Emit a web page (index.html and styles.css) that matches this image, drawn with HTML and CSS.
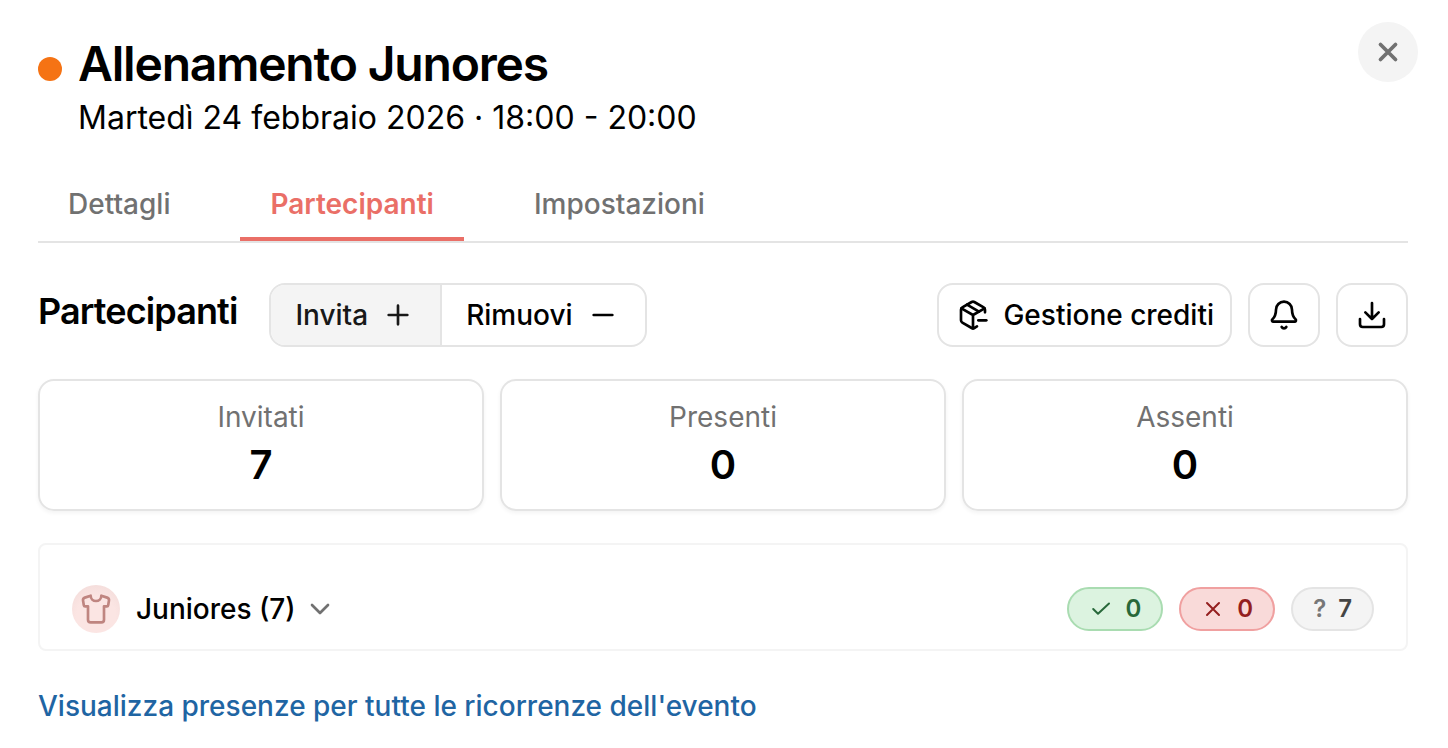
FILE: index.html
```
<!DOCTYPE html>
<html lang="it">
<head>
  <meta charset="UTF-8">
  <meta name="viewport" content="width=device-width, initial-scale=1.0">
  <title>Allenamento Junores</title>
  <link rel="stylesheet" href="styles.css">
</head>
<body>
  <main class="event">
    <header class="event-header">
      <span class="event-dot"></span>
      <div class="event-heading">
        <h1>Allenamento Junores</h1>
        <p class="event-date">Martedì 24 febbraio 2026 · 18:00 - 20:00</p>
      </div>
      <button class="close-button" type="button" aria-label="Chiudi">
        <svg class="icon close-icon" viewBox="0 0 24 24"><path d="M18 6 6 18M6 6l12 12"/></svg>
      </button>
    </header>

    <nav class="tabs">
      <button class="tab" type="button">Dettagli</button>
      <button class="tab active" type="button">Partecipanti</button>
      <button class="tab" type="button">Impostazioni</button>
    </nav>

    <section class="toolbar">
      <h2>Partecipanti</h2>
      <div class="button-group">
        <button class="group-button selected" type="button">
          Invita
          <svg class="icon" viewBox="0 0 24 24"><path d="M5 12h14M12 5v14"/></svg>
        </button>
        <button class="group-button" type="button">
          Rimuovi
          <svg class="icon" viewBox="0 0 24 24"><path d="M5 12h14"/></svg>
        </button>
      </div>
      <div class="toolbar-actions">
        <button class="outline-button" type="button">
          <svg class="icon" viewBox="0 0 24 24">
            <path d="M16 16h6"/>
            <path d="M21 10V8a2 2 0 0 0-1-1.73l-7-4a2 2 0 0 0-2 0l-7 4A2 2 0 0 0 3 8v8a2 2 0 0 0 1 1.73l7 4a2 2 0 0 0 2 0l2-1.14"/>
            <path d="m7.5 4.27 9 5.15"/>
            <path d="M3.29 7 12 12l8.71-5M12 22V12"/>
          </svg>
          Gestione crediti
        </button>
        <button class="outline-button icon-only" type="button" aria-label="Notifiche">
          <svg class="icon" viewBox="0 0 24 24">
            <path d="M10.268 21a2 2 0 0 0 3.464 0"/>
            <path d="M3.262 15.326A1 1 0 0 0 4 17h16a1 1 0 0 0 .74-1.673C19.41 13.956 18 12.499 18 8A6 6 0 0 0 6 8c0 4.499-1.411 5.956-2.738 7.326"/>
          </svg>
        </button>
        <button class="outline-button icon-only" type="button" aria-label="Scarica">
          <svg class="icon" viewBox="0 0 24 24">
            <path d="M21 15v4a2 2 0 0 1-2 2H5a2 2 0 0 1-2-2v-4"/>
            <path d="m7 10 5 5 5-5M12 15V3"/>
          </svg>
        </button>
      </div>
    </section>

    <section class="stats">
      <div class="stat">
        <span class="stat-label">Invitati</span>
        <span class="stat-value">7</span>
      </div>
      <div class="stat">
        <span class="stat-label">Presenti</span>
        <span class="stat-value">0</span>
      </div>
      <div class="stat">
        <span class="stat-label">Assenti</span>
        <span class="stat-value">0</span>
      </div>
    </section>

    <section class="team">
      <span class="team-avatar">
        <svg class="icon" viewBox="0 0 24 24">
          <path d="M20.38 3.46 16 2a4 4 0 0 1-8 0L3.62 3.46a2 2 0 0 0-1.34 2.23l.58 3.47a1 1 0 0 0 .99.84H6v10c0 1.1.9 2 2 2h8a2 2 0 0 0 2-2V10h2.15a1 1 0 0 0 .99-.84l.58-3.47a2 2 0 0 0-1.34-2.23z"/>
        </svg>
      </span>
      <button class="team-toggle" type="button">
        Juniores (7)
        <svg class="icon chevron" viewBox="0 0 24 24"><path d="m6 9 6 6 6-6"/></svg>
      </button>
      <div class="badges">
        <span class="badge present">
          <svg class="icon" viewBox="0 0 24 24"><path d="m4.2 12 4.800 4.800L20 6.500"/></svg>
          0
        </span>
        <span class="badge absent">
          <svg class="icon" viewBox="0 0 24 24"><path d="M18 6 6 18M6 6l12 12"/></svg>
          0
        </span>
        <span class="badge pending"><span class="badge-mark">?</span>7</span>
      </div>
    </section>

    <a class="all-link" href="#">Visualizza presenze per tutte le ricorrenze dell'evento</a>
  </main>
</body>
</html>
```
FILE: styles.css
```
* {
  box-sizing: border-box;
}
body {
  margin: 0;
  background: #fff;
  color: #000;
  font-family: Inter, "Liberation Sans", sans-serif;
  font-size: 28px;
  line-height: 40px;
  font-optical-sizing: none;
}
h1,
h2,
p {
  margin: 0;
}
button {
  font: inherit;
  font-weight: 500;
  color: inherit;
  background: none;
  border: 0;
  padding: 0;
  cursor: pointer;
}
.icon {
  width: 32px;
  height: 32px;
  flex: none;
  fill: none;
  stroke: currentColor;
  stroke-width: 2;
  stroke-linecap: round;
  stroke-linejoin: round;
}
.event {
  padding: 22px 40px 20px 38px;
}

/* header */
.event-header {
  display: flex;
  align-items: flex-start;
}
.event-dot {
  width: 24px;
  height: 24px;
  margin: 35px 16px 0 0;
  border-radius: 50%;
  background: #f57314;
}
.event-heading {
  flex: 1;
  padding-top: 14px;
}
h1 {
  font-size: 48px;
  font-weight: 600;
  line-height: 56px;
  letter-spacing: -0.025em;
}
.event-date {
  font-size: 32px;
  line-height: 52px;
}
.close-button {
  display: flex;
  align-items: center;
  justify-content: center;
  width: 60px;
  height: 60px;
  margin-right: -10px;
  border-radius: 50%;
  background: #f4f4f4;
  color: #717171;
}
.close-icon {
  width: 30px;
  height: 30px;
  stroke-width: 3;
}

/* tabs */
.tabs {
  display: flex;
  gap: 40px;
  margin-top: 32px;
  border-bottom: 2px solid #e4e4e4;
}
.tab {
  padding: 8px 30px 13px;
  border-bottom: 4px solid transparent;
  color: #717171;
}
.tab.active {
  border-color: #ea6f67;
  color: #ea6f67;
  font-weight: 600;
}

/* toolbar */
.toolbar {
  display: flex;
  align-items: center;
  margin-top: 40px;
}
h2 {
  margin-right: 32px;
  padding-bottom: 8px;
  font-size: 36px;
  font-weight: 600;
  letter-spacing: -0.025em;
}
.button-group {
  display: flex;
  border: 2px solid #e4e4e4;
  border-radius: 16px;
  overflow: hidden;
}
.group-button {
  display: flex;
  align-items: center;
  gap: 14px;
  height: 60px;
  padding: 0 26px 0 24px;
}
.group-button.selected {
  border-right: 2px solid #e4e4e4;
  background: #f4f4f4;
  color: #181818;
}
.toolbar-actions {
  display: flex;
  gap: 16px;
  margin-left: auto;
}
.outline-button {
  display: flex;
  align-items: center;
  justify-content: center;
  gap: 14px;
  height: 64px;
  padding: 0 16px 0 18px;
  border: 2px solid #e4e4e4;
  border-radius: 16px;
}
.icon-only {
  width: 72px;
  padding: 0;
}

/* totals */
.stats {
  display: grid;
  grid-template-columns: repeat(3, 1fr);
  gap: 16px;
  margin-top: 32px;
}
.stat {
  display: flex;
  flex-direction: column;
  align-items: center;
  padding: 16px;
  border: 2px solid #e4e4e4;
  border-radius: 16px;
  box-shadow: 0 2px 4px rgba(0, 0, 0, 0.05);
}
.stat-label {
  color: #717171;
}
.stat-value {
  font-size: 40px;
  font-weight: 600;
  line-height: 56px;
}

/* team row */
.team {
  display: flex;
  align-items: center;
  margin-top: 32px;
  padding: 40px 32px 16px;
  border: 2px solid #f4f4f4;
  border-radius: 8px;
}
.team-avatar {
  display: flex;
  align-items: center;
  justify-content: center;
  width: 48px;
  height: 48px;
  margin-right: 16px;
  border-radius: 50%;
  background: radial-gradient(circle at 50% 65%, #fbe5e3 50%, #f0d9d7);
  color: #bf8580;
}
.team-toggle {
  display: flex;
  align-items: center;
  gap: 8px;
}
.chevron {
  color: #717171;
}
.badges {
  display: flex;
  gap: 16px;
  margin-left: auto;
}
.badge {
  display: flex;
  align-items: center;
  gap: 12px;
  height: 44px;
  padding: 0 20px;
  border: 2px solid;
  border-radius: 22px;
  font-size: 24px;
  font-weight: 600;
}
.badge .icon {
  width: 24px;
  height: 24px;
}
.present {
  border-color: #a9dcb1;
  background: #dcf3e0;
  color: #28683a;
}
.absent {
  border-color: #f0a0a0;
  background: #f9dad9;
  color: #941f1f;
}
.pending {
  border-color: #e4e4e4;
  background: #f4f4f4;
  color: #444;
}
.badge-mark {
  color: #777;
}

.all-link {
  display: inline-block;
  margin-top: 35px;
  color: #1f65a3;
  font-weight: 500;
  text-decoration: none;
}
```
